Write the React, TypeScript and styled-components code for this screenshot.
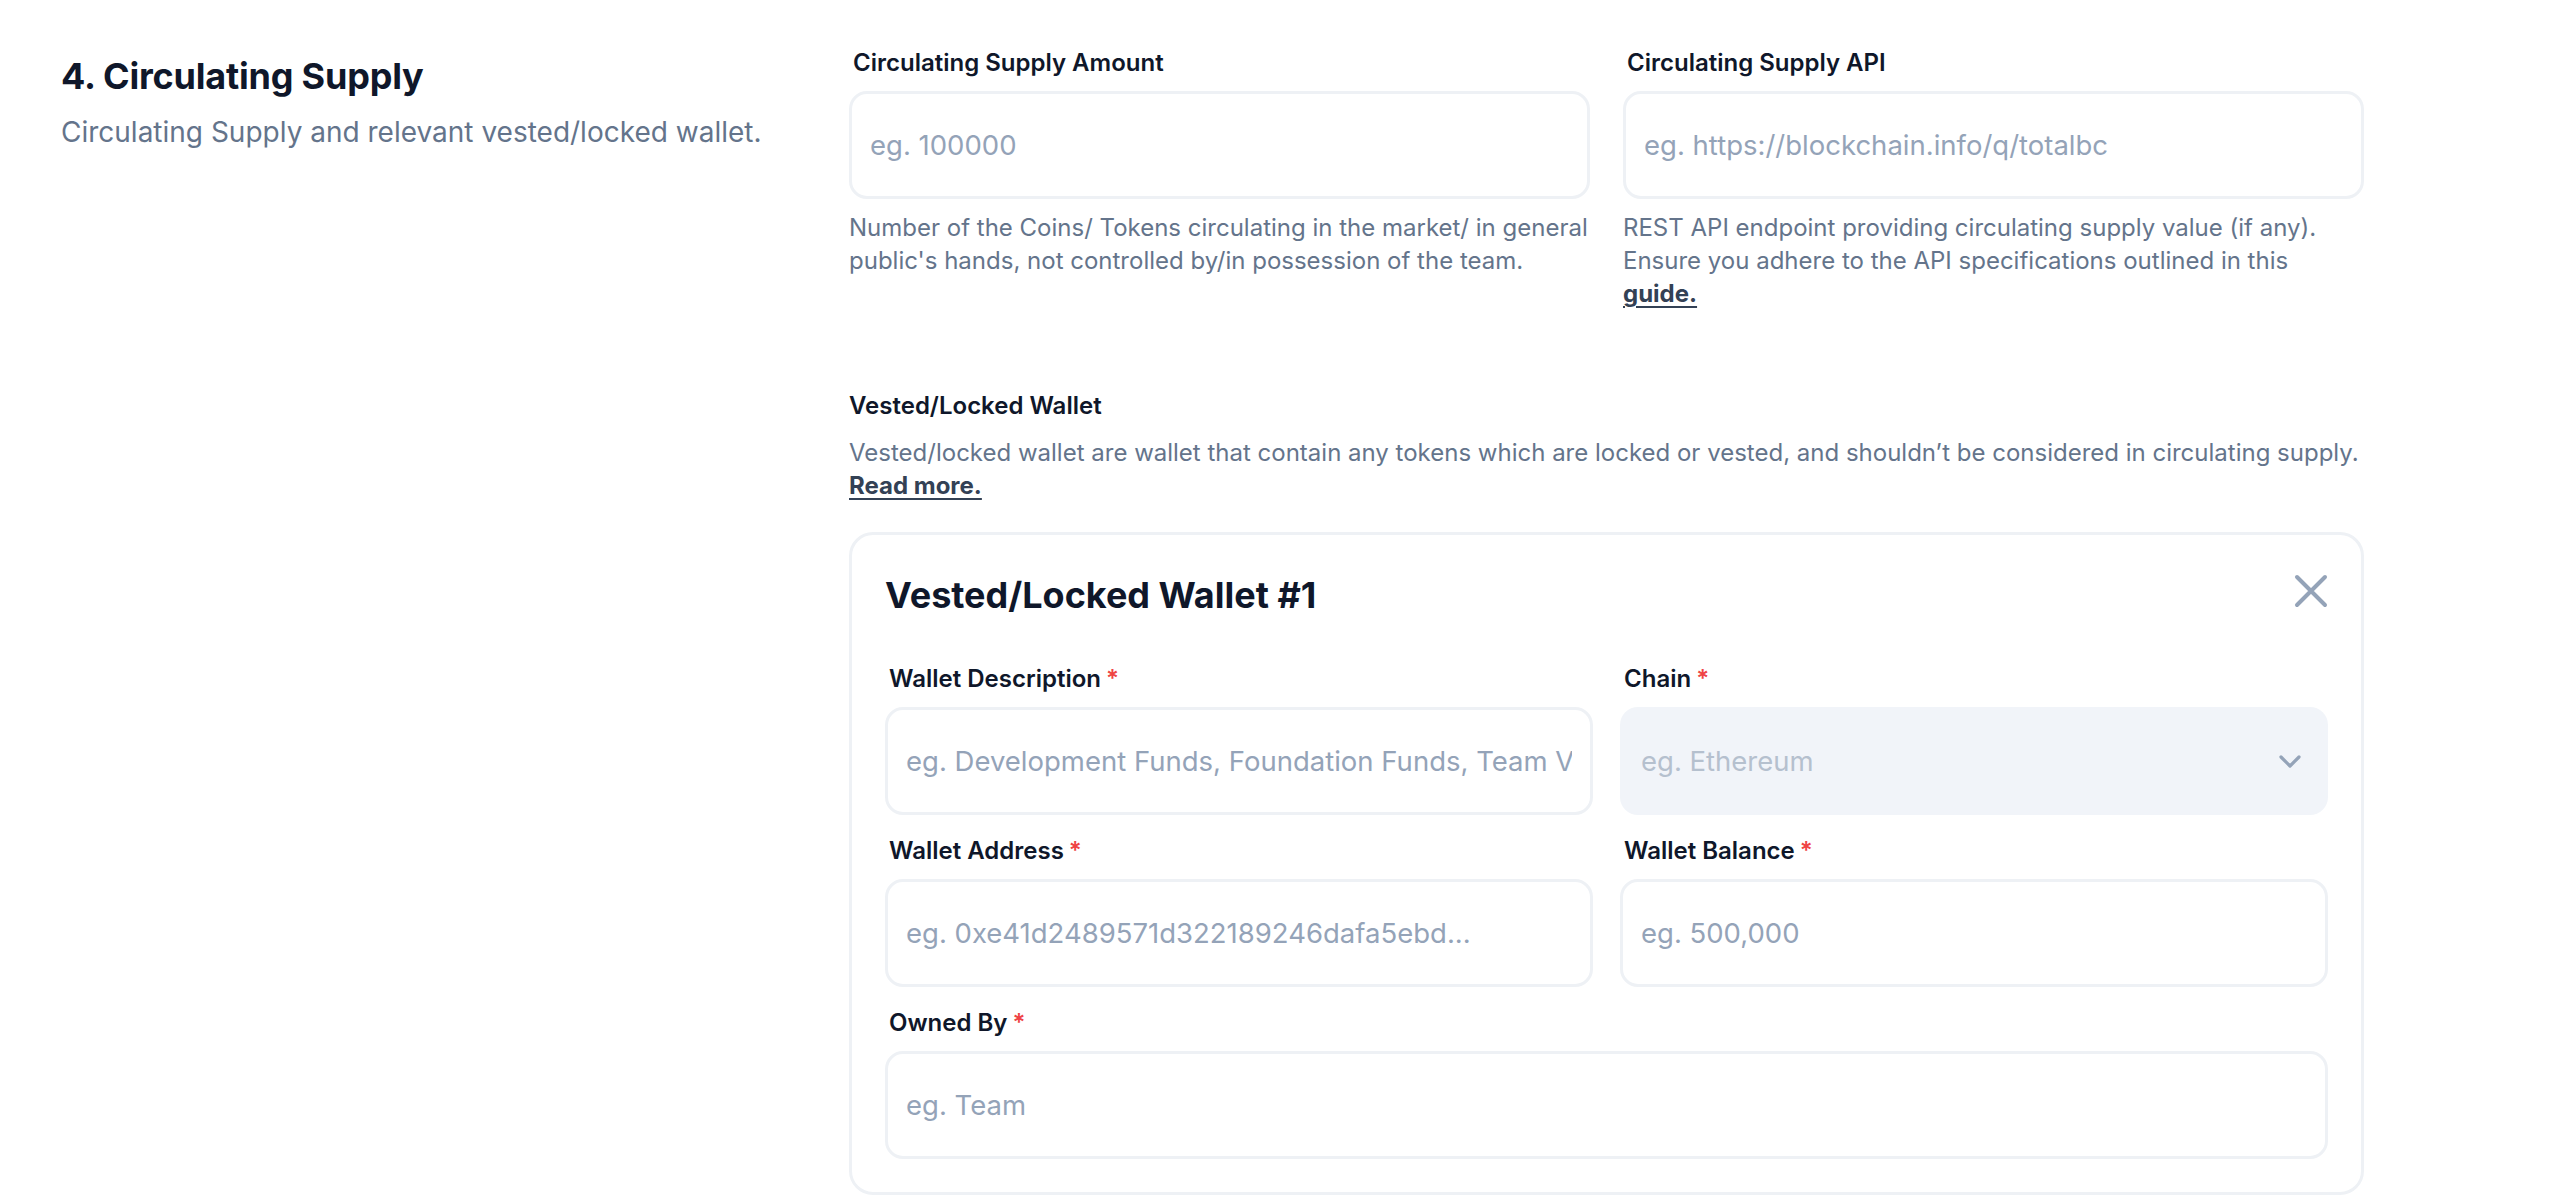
import styled, { createGlobalStyle } from "styled-components";

const GlobalStyle = createGlobalStyle`
  html, body {
    margin: 0;
    padding: 0;
    background: #ffffff;
  }
  body {
    font-family: Inter, "Noto Sans", "Liberation Sans", sans-serif;
    color: #0f172a;
    -webkit-font-smoothing: antialiased;
  }
  * {
    box-sizing: border-box;
  }
`;

const color = {
  heading: "#0f172a",
  text: "#64748b",
  link: "#334155",
  placeholder: "#94a3b8",
  border: "#eef1f5",
  selectBg: "#f1f4f9",
  required: "#ef4444",
};

const Section = styled.section`
  display: flex;
  gap: 28px;
  padding: 46px 0 0 61px;
`;

const Aside = styled.div`
  width: 760px;
  flex-shrink: 0;
`;

const Heading = styled.h2`
  margin: 6px 0 0;
  font-size: 36px;
  line-height: 48px;
  font-weight: 700;
  letter-spacing: -0.2px;
  color: ${color.heading};
`;

const Subtitle = styled.p`
  margin: 12px 0 0;
  font-size: 28px;
  line-height: 40px;
  color: ${color.text};
`;

const Main = styled.div`
  width: 1515px;
  flex-shrink: 0;
`;

const FieldGrid = styled.div<{ $gap: number }>`
  display: grid;
  grid-template-columns: 1fr 1fr;
  column-gap: ${(p) => p.$gap}px;
  row-gap: 19px;
`;

const Field = styled.div<{ $wide?: boolean }>`
  display: flex;
  flex-direction: column;
  min-width: 0;
  grid-column: ${(p) => (p.$wide ? "1 / -1" : "auto")};
`;

const Label = styled.label`
  padding-left: 4px;
  font-size: 24px;
  line-height: 33px;
  font-weight: 600;
  color: ${color.heading};
`;

const Required = styled.span`
  margin-left: 5px;
  color: ${color.required};
`;

const Input = styled.input`
  margin-top: 12px;
  width: 100%;
  height: 108px;
  padding: 0 18px;
  border: 3px solid ${color.border};
  border-radius: 18px;
  background: #ffffff;
  font-family: Inter, "Noto Sans", "Liberation Sans", sans-serif;
  font-size: 27.5px;
  color: ${color.heading};
  outline: none;

  &::placeholder {
    color: ${color.placeholder};
  }
`;

const SelectBox = styled.div`
  margin-top: 12px;
  height: 108px;
  display: flex;
  align-items: center;
  justify-content: space-between;
  padding: 0 18px 0 21px;
  border-radius: 18px;
  background: ${color.selectBg};
  font-size: 27.5px;
  color: #b5c0ce;
  cursor: not-allowed;
`;

const Help = styled.p`
  margin: 12px 0 0;
  font-size: 24px;
  line-height: 33px;
  color: ${color.text};
`;

const Link = styled.a`
  font-weight: 700;
  color: ${color.link};
  text-decoration: underline;
  text-underline-offset: 4px;
  text-decoration-thickness: 2px;
`;

const GroupTitle = styled.h3`
  margin: 79px 0 0;
  font-size: 24px;
  line-height: 33px;
  font-weight: 600;
  color: ${color.heading};
`;

const GroupText = styled.p`
  margin: 14px 0 0;
  font-size: 24px;
  line-height: 33px;
  color: ${color.text};
  white-space: nowrap;
`;

const Card = styled.div`
  margin-top: 30px;
  padding: 36px 33px 33px;
  border: 3px solid ${color.border};
  border-radius: 24px;
`;

const CardHeader = styled.div`
  display: flex;
  align-items: center;
  justify-content: space-between;
  margin-bottom: 43px;
`;

const CardTitle = styled.h4`
  margin: 0;
  font-size: 36px;
  line-height: 48px;
  font-weight: 700;
  color: ${color.heading};
`;

const CloseButton = styled.button`
  display: flex;
  padding: 0;
  margin-top: -8px;
  border: none;
  background: none;
  color: ${color.placeholder};
  cursor: pointer;
`;

const CloseIcon = () => (
  <svg width="34" height="34" viewBox="0 0 34 34" fill="none">
    <path
      d="M3 3L31 31M31 3L3 31"
      stroke="currentColor"
      strokeWidth="4"
      strokeLinecap="round"
    />
  </svg>
);

const ChevronIcon = () => (
  <svg width="40" height="40" viewBox="0 0 40 40" fill="none">
    <path
      d="M11 16L20 25L29 16"
      stroke={color.placeholder}
      strokeWidth="3.2"
      strokeLinecap="round"
      strokeLinejoin="round"
    />
  </svg>
);

const RequiredLabel = ({ text }: { text: string }) => (
  <Label>
    {text}
    <Required>*</Required>
  </Label>
);

const App = () => {
  return (
    <>
      <GlobalStyle />
      <Section>
        <Aside>
          <Heading>4. Circulating Supply</Heading>
          <Subtitle>Circulating Supply and relevant vested/locked wallet.</Subtitle>
        </Aside>
        <Main>
          <FieldGrid $gap={33}>
            <Field>
              <Label>Circulating Supply Amount</Label>
              <Input placeholder="eg. 100000" />
              <Help>
                Number of the Coins/ Tokens circulating in the market/ in general
                <br />
                public's hands, not controlled by/in possession of the team.
              </Help>
            </Field>
            <Field>
              <Label>Circulating Supply API</Label>
              <Input placeholder="eg. https://blockchain.info/q/totalbc" />
              <Help>
                REST API endpoint providing circulating supply value (if any).
                <br />
                Ensure you adhere to the API specifications outlined in this
                <br />
                <Link>guide.</Link>
              </Help>
            </Field>
          </FieldGrid>

          <GroupTitle>Vested/Locked Wallet</GroupTitle>
          <GroupText>
            Vested/locked wallet are wallet that contain any tokens which are locked or
            vested, and shouldn’t be considered in circulating supply.
            <br />
            <Link>Read more.</Link>
          </GroupText>

          <Card>
            <CardHeader>
              <CardTitle>Vested/Locked Wallet #1</CardTitle>
              <CloseButton aria-label="Remove wallet">
                <CloseIcon />
              </CloseButton>
            </CardHeader>
            <FieldGrid $gap={27}>
              <Field>
                <RequiredLabel text="Wallet Description" />
                <Input placeholder="eg. Development Funds, Foundation Funds, Team Vesting" />
              </Field>
              <Field>
                <RequiredLabel text="Chain" />
                <SelectBox>
                  <span>eg. Ethereum</span>
                  <ChevronIcon />
                </SelectBox>
              </Field>
              <Field>
                <RequiredLabel text="Wallet Address" />
                <Input placeholder="eg. 0xe41d2489571d322189246dafa5ebd..." />
              </Field>
              <Field>
                <RequiredLabel text="Wallet Balance" />
                <Input placeholder="eg. 500,000" />
              </Field>
              <Field $wide>
                <RequiredLabel text="Owned By" />
                <Input placeholder="eg. Team" />
              </Field>
            </FieldGrid>
          </Card>
        </Main>
      </Section>
    </>
  );
};

export default App;
